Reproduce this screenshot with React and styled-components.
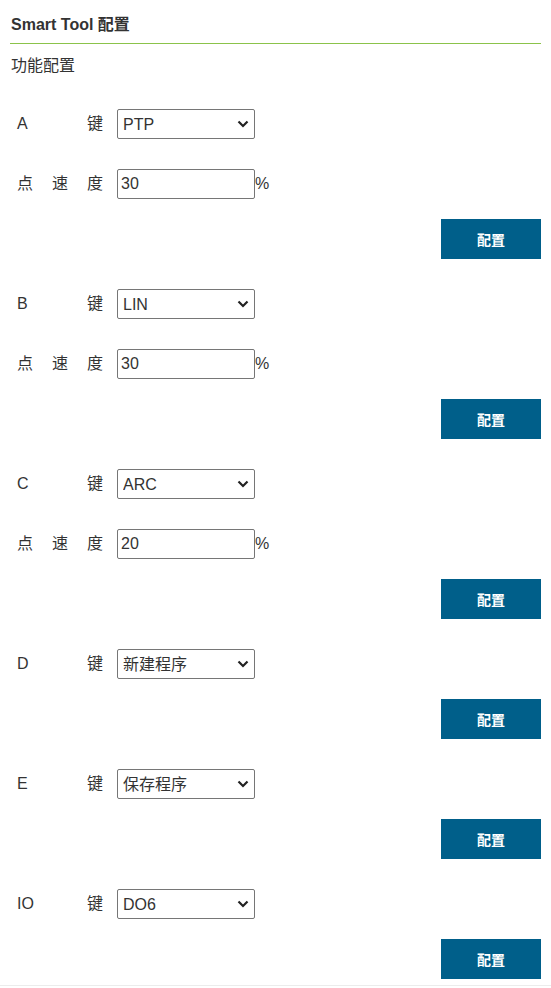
import React from 'react';
import styled, { createGlobalStyle } from 'styled-components';

const GlobalStyle = createGlobalStyle`
	body {
		margin: 0;
		background: #fff;
		font-family: 'Liberation Sans', Arial, 'Noto Sans CJK SC', sans-serif;
		color: #333;
	}
`;

const groups = [
	{ key: 'A', mode: 'PTP', options: ['PTP', 'LIN', 'ARC'], speed: '30' },
	{ key: 'B', mode: 'LIN', options: ['PTP', 'LIN', 'ARC'], speed: '30' },
	{ key: 'C', mode: 'ARC', options: ['PTP', 'LIN', 'ARC'], speed: '20' },
	{ key: 'D', mode: '新建程序', options: ['新建程序', '保存程序'] },
	{ key: 'E', mode: '保存程序', options: ['新建程序', '保存程序'] },
	{ key: 'IO', mode: 'DO6', options: ['DO1', 'DO2', 'DO3', 'DO4', 'DO5', 'DO6'] },
];

const Chevron = () => (
	<svg width='12' height='8' viewBox='0 0 12 8'>
		<path d='M1.5 1.5 L6 6 L10.5 1.5' fill='none' stroke='#222' strokeWidth='2.2' />
	</svg>
);

const App = () => {
	return (
		<Page>
			<GlobalStyle />
			<Header>
				<Title>Smart Tool 配置</Title>
			</Header>
			<SubTitle>功能配置</SubTitle>
			<GroupList>
				{groups.map((g) => (
					<Group key={g.key}>
						<Row>
							<Label>
								<span>{g.key}</span>
								<span>键</span>
							</Label>
							<SelectWrap>
								<Select defaultValue={g.mode}>
									{g.options.map((o) => (
										<option key={o}>{o}</option>
									))}
								</Select>
								<Arrow>
									<Chevron />
								</Arrow>
							</SelectWrap>
						</Row>
						{g.speed && (
							<Row>
								<Label>
									<span>点</span>
									<span>速</span>
									<span>度</span>
								</Label>
								<Input defaultValue={g.speed} />
								<Unit>%</Unit>
							</Row>
						)}
						<Actions>
							<Button>配置</Button>
						</Actions>
					</Group>
				))}
			</GroupList>
		</Page>
	);
};
export default App;

const Page = styled.div`
	padding: 0 10px 6px;
	border-bottom: 1px solid #ececec;
`;

const Header = styled.div`
	padding: 12px 0 5px;
	border-bottom: 1px solid #8bc34a;
`;

const Title = styled.h1`
	margin: 0;
	padding-left: 1px;
	font-size: 16px;
	font-weight: bold;
	line-height: 26px;
	color: #333;
`;

const SubTitle = styled.div`
	margin-top: 10px;
	padding-left: 1px;
	font-size: 16px;
	line-height: 24px;
`;

const GroupList = styled.div`
	display: flex;
	flex-direction: column;
	gap: 30px;
	margin-top: 31px;
`;

const Group = styled.div`
	display: flex;
	flex-direction: column;
	gap: 30px;
`;

const Row = styled.div`
	display: flex;
	align-items: center;
	height: 30px;
	padding-left: 7px;
`;

const Label = styled.div`
	display: flex;
	justify-content: space-between;
	align-items: center;
	width: 86px;
	margin-right: 14px;
	font-size: 16px;
	line-height: 30px;
	span {
		line-height: 30px;
		height: 30px;
	}
`;

const SelectWrap = styled.div`
	position: relative;
	width: 138px;
	height: 30px;
`;

const Select = styled.select`
	appearance: none;
	width: 100%;
	height: 100%;
	box-sizing: border-box;
	padding: 0 24px 0 5px;
	border: 1px solid #767676;
	border-radius: 2px;
	background: #fff;
	font-family: inherit;
	font-size: 16px;
	color: #333;
	outline: none;
`;

const Arrow = styled.span`
	position: absolute;
	right: 6px;
	top: 11px;
	display: flex;
	pointer-events: none;
`;

const Input = styled.input`
	width: 138px;
	height: 30px;
	box-sizing: border-box;
	padding: 0 3px;
	border: 1px solid #767676;
	border-radius: 2px;
	font-family: inherit;
	font-size: 16px;
	color: #333;
`;

const Unit = styled.span`
	font-size: 16px;
`;

const Actions = styled.div`
	display: flex;
	justify-content: flex-end;
	margin-top: -10px;
`;

const Button = styled.button`
	width: 100px;
	height: 40px;
	border: none;
	background: #005f8a;
	color: #fff;
	font-family: inherit;
	font-size: 14px;
	font-weight: bold;
`;
